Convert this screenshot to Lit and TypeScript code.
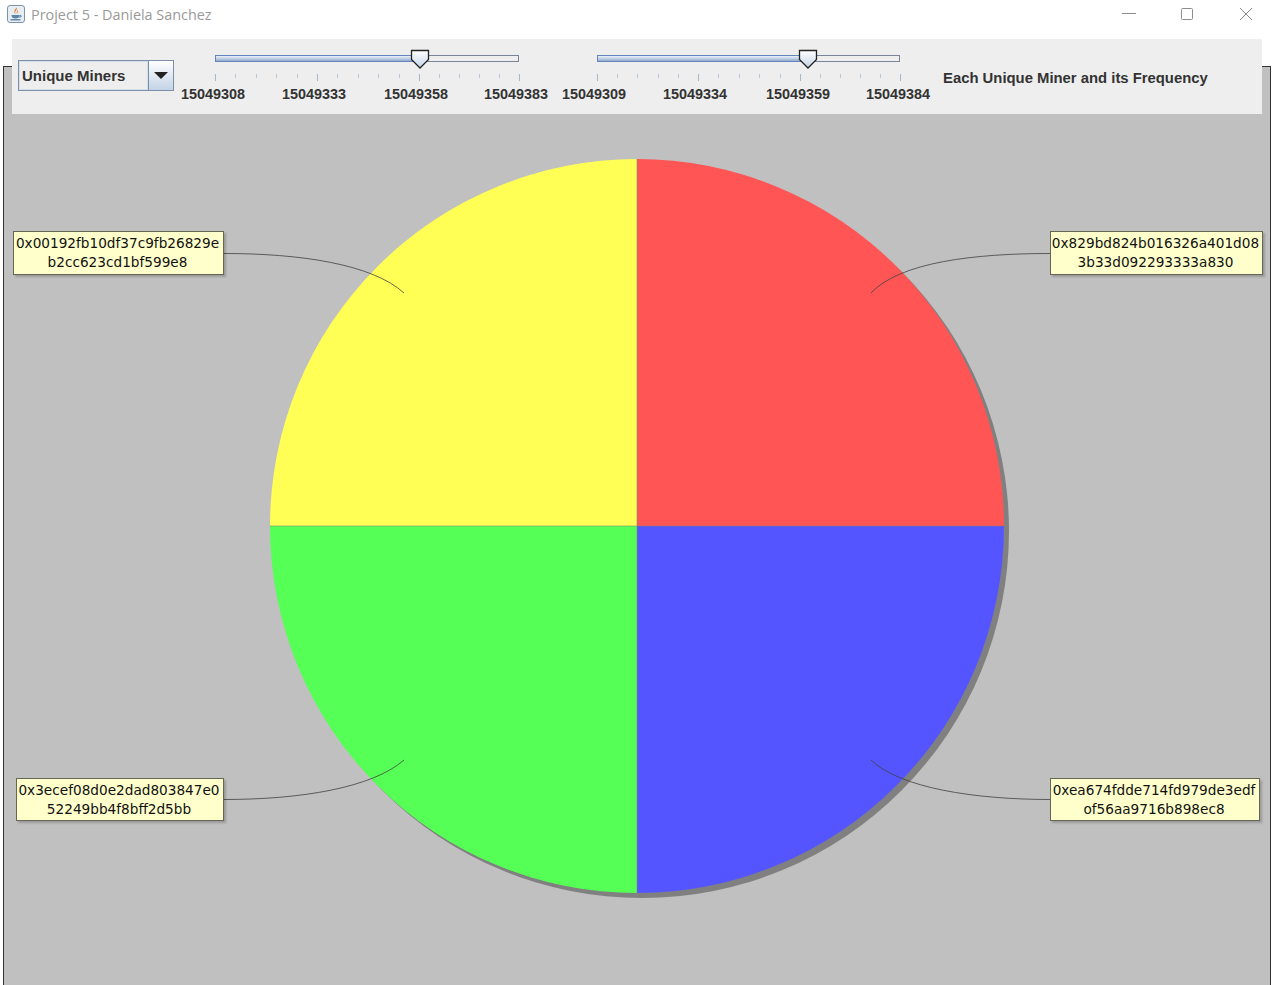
import { LitElement, html, css, svg } from "lit";
import { customElement, property } from "lit/decorators.js";

@customElement("miner-slider")
export class MinerSlider extends LitElement {
  @property({ type: Array }) labels: string[] = [];
  @property({ type: Array }) majors: number[] = [];
  @property({ type: Array }) offsets: number[] = [];
  @property({ type: Number }) thumb = 0;

  static styles = css`
    :host {
      display: block;
      width: 368px;
    }
    svg {
      display: block;
    }
    .labels {
      display: flex;
      margin-top: 4px;
      font: bold 14.4px/17px "Liberation Sans", Arial, sans-serif;
      color: #333333;
    }
    .labels span {
      width: 64px;
      white-space: nowrap;
    }
  `;

  render() {
    const m = this.majors;
    const s = m[0];
    const e = m[m.length - 1];
    const t = this.thumb;
    // five tick steps between each pair of major ticks
    const ticks: { x: number; major: boolean }[] = [];
    m.forEach((x, i) => {
      ticks.push({ x: x + 0.5, major: true });
      if (i < m.length - 1) {
        for (let k = 1; k < 5; k++) {
          ticks.push({ x: Math.round(x + ((m[i + 1] - x) * k) / 5) + 0.5, major: false });
        }
      }
    });
    return html`
      <svg width="368" height="33" viewBox="0 0 368 33">
        <defs>
          <linearGradient id="fill" x1="0" y1="0" x2="0" y2="1">
            <stop offset="0" stop-color="#f4f7fb"></stop>
            <stop offset="0.5" stop-color="#c0d0e6"></stop>
            <stop offset="1" stop-color="#8aa2c4"></stop>
          </linearGradient>
          <linearGradient id="knob" x1="0" y1="0" x2="0" y2="1">
            <stop offset="0" stop-color="#ffffff"></stop>
            <stop offset="1" stop-color="#c3d3e6"></stop>
          </linearGradient>
        </defs>
        <rect x=${s + 0.5} y="6.5" width=${e - s - 1} height="6" fill="#eeeeee" stroke="#7a8599"></rect>
        <rect x=${s + 0.5} y="6.5" width=${t - s} height="6" fill="url(#fill)" stroke="#6384bd"></rect>
        ${ticks.map(
          (k) =>
            svg`<line x1=${k.x} x2=${k.x} y1="25" y2=${k.major ? 32 : 29} stroke=${k.major ? "#a3b8cc" : "#b8c8d8"}></line>`
        )}
        <path
          d="M${t - 8.5} 1.5 h17 v9 l-8.5 8.5 l-8.5 -8.5 z"
          fill="url(#knob)"
          stroke="#222222"
          stroke-width="1.3"
        ></path>
      </svg>
      <div class="labels">
        ${this.labels.map(
          (l, i) =>
            html`<span style="margin-left:${i === 0 ? 0 : this.offsets[i] - this.offsets[i - 1] - 64}px">${l}</span>`
        )}
      </div>
    `;
  }
}

interface Slice {
  address: string[];
  color: string;
  d: string;
  curve: string;
  x: number;
  y: number;
  w: number;
  h: number;
}

const CX = 637;
const CY = 526;
const R = 367;

const slices: Slice[] = [
  {
    address: ["0x829bd824b016326a401d08", "3b33d092293333a830"],
    color: "#ff5555",
    d: `M${CX} ${CY} V${CY - R} A${R} ${R} 0 0 1 ${CX + R} ${CY} Z`,
    curve: "M1050 253.5 C975 253.5 900 262 871 293",
    x: 1050,
    y: 231,
    w: 213,
    h: 44,
  },
  {
    address: ["0x00192fb10df37c9fb26829e", "b2cc623cd1bf599e8"],
    color: "#ffff55",
    d: `M${CX} ${CY} H${CX - R} A${R} ${R} 0 0 1 ${CX} ${CY - R} Z`,
    curve: "M224 253.5 C300 253.5 372 264 404 293",
    x: 13,
    y: 231,
    w: 211,
    h: 44,
  },
  {
    address: ["0x3ecef08d0e2dad803847e0", "52249bb4f8bff2d5bb"],
    color: "#55ff55",
    d: `M${CX} ${CY} V${CY + R} A${R} ${R} 0 0 1 ${CX - R} ${CY} Z`,
    curve: "M224 799.5 C300 799.5 372 788 404 760",
    x: 16,
    y: 778,
    w: 208,
    h: 43,
  },
  {
    address: ["0xea674fdde714fd979de3edf", "of56aa9716b898ec8"],
    color: "#5555ff",
    d: `M${CX} ${CY} H${CX + R} A${R} ${R} 0 0 1 ${CX} ${CY + R} Z`,
    curve: "M1050 799.5 C975 799.5 900 788 871 760",
    x: 1050,
    y: 778,
    w: 210,
    h: 43,
  },
];

@customElement("app-root")
export class AppRoot extends LitElement {
  static styles = css`
    :host {
      display: block;
      width: 1272px;
      height: 985px;
      overflow: hidden;
      background: #ffffff;
    }
    .titlebar {
      display: flex;
      align-items: center;
      box-sizing: border-box;
      height: 30px;
      padding: 0 0 2px 7px;
      font: 14.4px "Open Sans", "Noto Sans", sans-serif;
      color: #9a9a9a;
    }
    .title {
      margin-left: 6px;
      flex: 1;
    }
    .winbtn {
      display: block;
      width: 59px;
      height: 28px;
    }
    .stage {
      display: grid;
      margin-top: 9px;
    }
    .stage > * {
      grid-area: 1 / 1;
    }
    .toolbar {
      z-index: 1;
      display: flex;
      align-items: flex-start;
      width: 1244px;
      height: 75px;
      margin-left: 12px;
      padding-left: 6px;
      background: #eeeeee;
    }
    .combo {
      display: flex;
      width: 156px;
      height: 31px;
      margin: 21px 7px 0 0;
      border: 1px solid #7c8fa8;
      box-sizing: border-box;
    }
    .combo-text {
      flex: 1;
      padding-left: 2px;
      border: 1px solid #d5dfeb;
      background: #eeeeee;
      font: bold 15px/27px "Liberation Sans", Arial, sans-serif;
      color: #333333;
    }
    .combo-arrow {
      display: flex;
      align-items: center;
      justify-content: center;
      width: 24px;
      border-left: 1px solid #7c8fa8;
      background: linear-gradient(#ffffff, #c3d3e6);
    }
    .arrow {
      width: 0;
      height: 0;
      border-left: 7px solid transparent;
      border-right: 7px solid transparent;
      border-top: 7px solid #222222;
    }
    miner-slider {
      margin-top: 10px;
    }
    miner-slider + miner-slider {
      margin-left: 13px;
    }
    .caption {
      margin: 31px 0 0 13px;
      font: bold 14.85px/17px "Liberation Sans", Arial, sans-serif;
      color: #333333;
      white-space: nowrap;
    }
    .chart {
      position: relative;
      width: 1266px;
      height: 918px;
      margin: 27px 0 0 3px;
      border: 1px solid #333333;
      border-bottom: none;
      background: #c0c0c0;
    }
    .chart svg {
      display: block;
    }
    .tip {
      position: absolute;
      box-sizing: border-box;
      display: flex;
      flex-direction: column;
      justify-content: center;
      padding-right: 2px;
      border: 1px solid #666655;
      background: #ffffcc;
      box-shadow: 2px 2px 2px rgba(0, 0, 0, 0.2);
      font: 13.65px/19px "DejaVu Sans", sans-serif;
      color: #111111;
      text-align: center;
      white-space: nowrap;
    }
  `;

  render() {
    return html`
      <div class="titlebar">
        <svg width="18" height="18" viewBox="0 0 18 18">
          <rect x="0.5" y="0.5" width="17" height="17" rx="2.5" fill="#e6edf3" stroke="#7f93a6"></rect>
          <path d="M9.5 2.5 C11 5 7 6 8.5 9 C6.5 7.5 7.5 5 9.5 2.5 Z" fill="#e4792a"></path>
          <path d="M11 5 C11.5 6.5 10 7.5 10.2 9 C9.2 7.8 9.8 6 11 5 Z" fill="#e4792a"></path>
          <path d="M4.5 10 H12.5 C12.5 12.5 11 13.5 8.5 13.5 C6 13.5 4.5 12.5 4.5 10 Z" fill="#5b86a8"></path>
          <path d="M12.5 10.5 H14 V12 H12" fill="none" stroke="#5b86a8"></path>
          <path d="M3.5 14.8 H13.5" stroke="#4a7396" stroke-width="1.2"></path>
        </svg>
        <span class="title">Project 5 - Daniela Sanchez</span>
        <svg class="winbtn" viewBox="0 0 59 28">
          <line x1="27" x2="41" y1="13.5" y2="13.5" stroke="#8c8c8c"></line>
        </svg>
        <svg class="winbtn" viewBox="0 0 59 28">
          <rect x="27.5" y="8.5" width="11" height="11" rx="1" fill="none" stroke="#8c8c8c"></rect>
        </svg>
        <svg class="winbtn" viewBox="0 0 59 28">
          <path d="M27 8 L39 20 M39 8 L27 20" stroke="#8c8c8c" fill="none"></path>
        </svg>
      </div>
      <div class="stage">
        <div class="toolbar">
          <div class="combo">
            <div class="combo-text">Unique Miners</div>
            <div class="combo-arrow"><div class="arrow"></div></div>
          </div>
          <miner-slider
            .labels=${["15049308", "15049333", "15049358", "15049383"]}
            .offsets=${[0, 101, 203, 303]}
            .majors=${[34, 136, 238, 338]}
            .thumb=${239}
          ></miner-slider>
          <miner-slider
            .labels=${["15049309", "15049334", "15049359", "15049384"]}
            .offsets=${[0, 101, 204, 304]}
            .majors=${[35, 136, 238, 338]}
            .thumb=${246}
          ></miner-slider>
          <div class="caption">Each Unique Miner and its Frequency</div>
        </div>
        <div class="chart">
          <svg width="1266" height="918" viewBox="4 67 1266 918">
            <circle cx=${CX + 5} cy=${CY + 5} r=${R} fill="#808080"></circle>
            ${slices.map((s) => svg`<path d=${s.d} fill=${s.color}></path>`)}
            <path
              d="M${CX - R} ${CY} H${CX + R} M${CX} ${CY - R} V${CY + R}"
              stroke="#808080"
              stroke-opacity="0.55"
              fill="none"
            ></path>
            ${slices.map(
              (s) => svg`<path d=${s.curve} fill="none" stroke="#404040" stroke-width="0.8"></path>`
            )}
          </svg>
          ${slices.map(
            (s) => html`
              <div
                class="tip"
                style="left:${s.x - 4}px;top:${s.y - 67}px;width:${s.w}px;height:${s.h}px"
              >
                ${s.address.map((line) => html`<div>${line}</div>`)}
              </div>
            `
          )}
        </div>
      </div>
    `;
  }
}
